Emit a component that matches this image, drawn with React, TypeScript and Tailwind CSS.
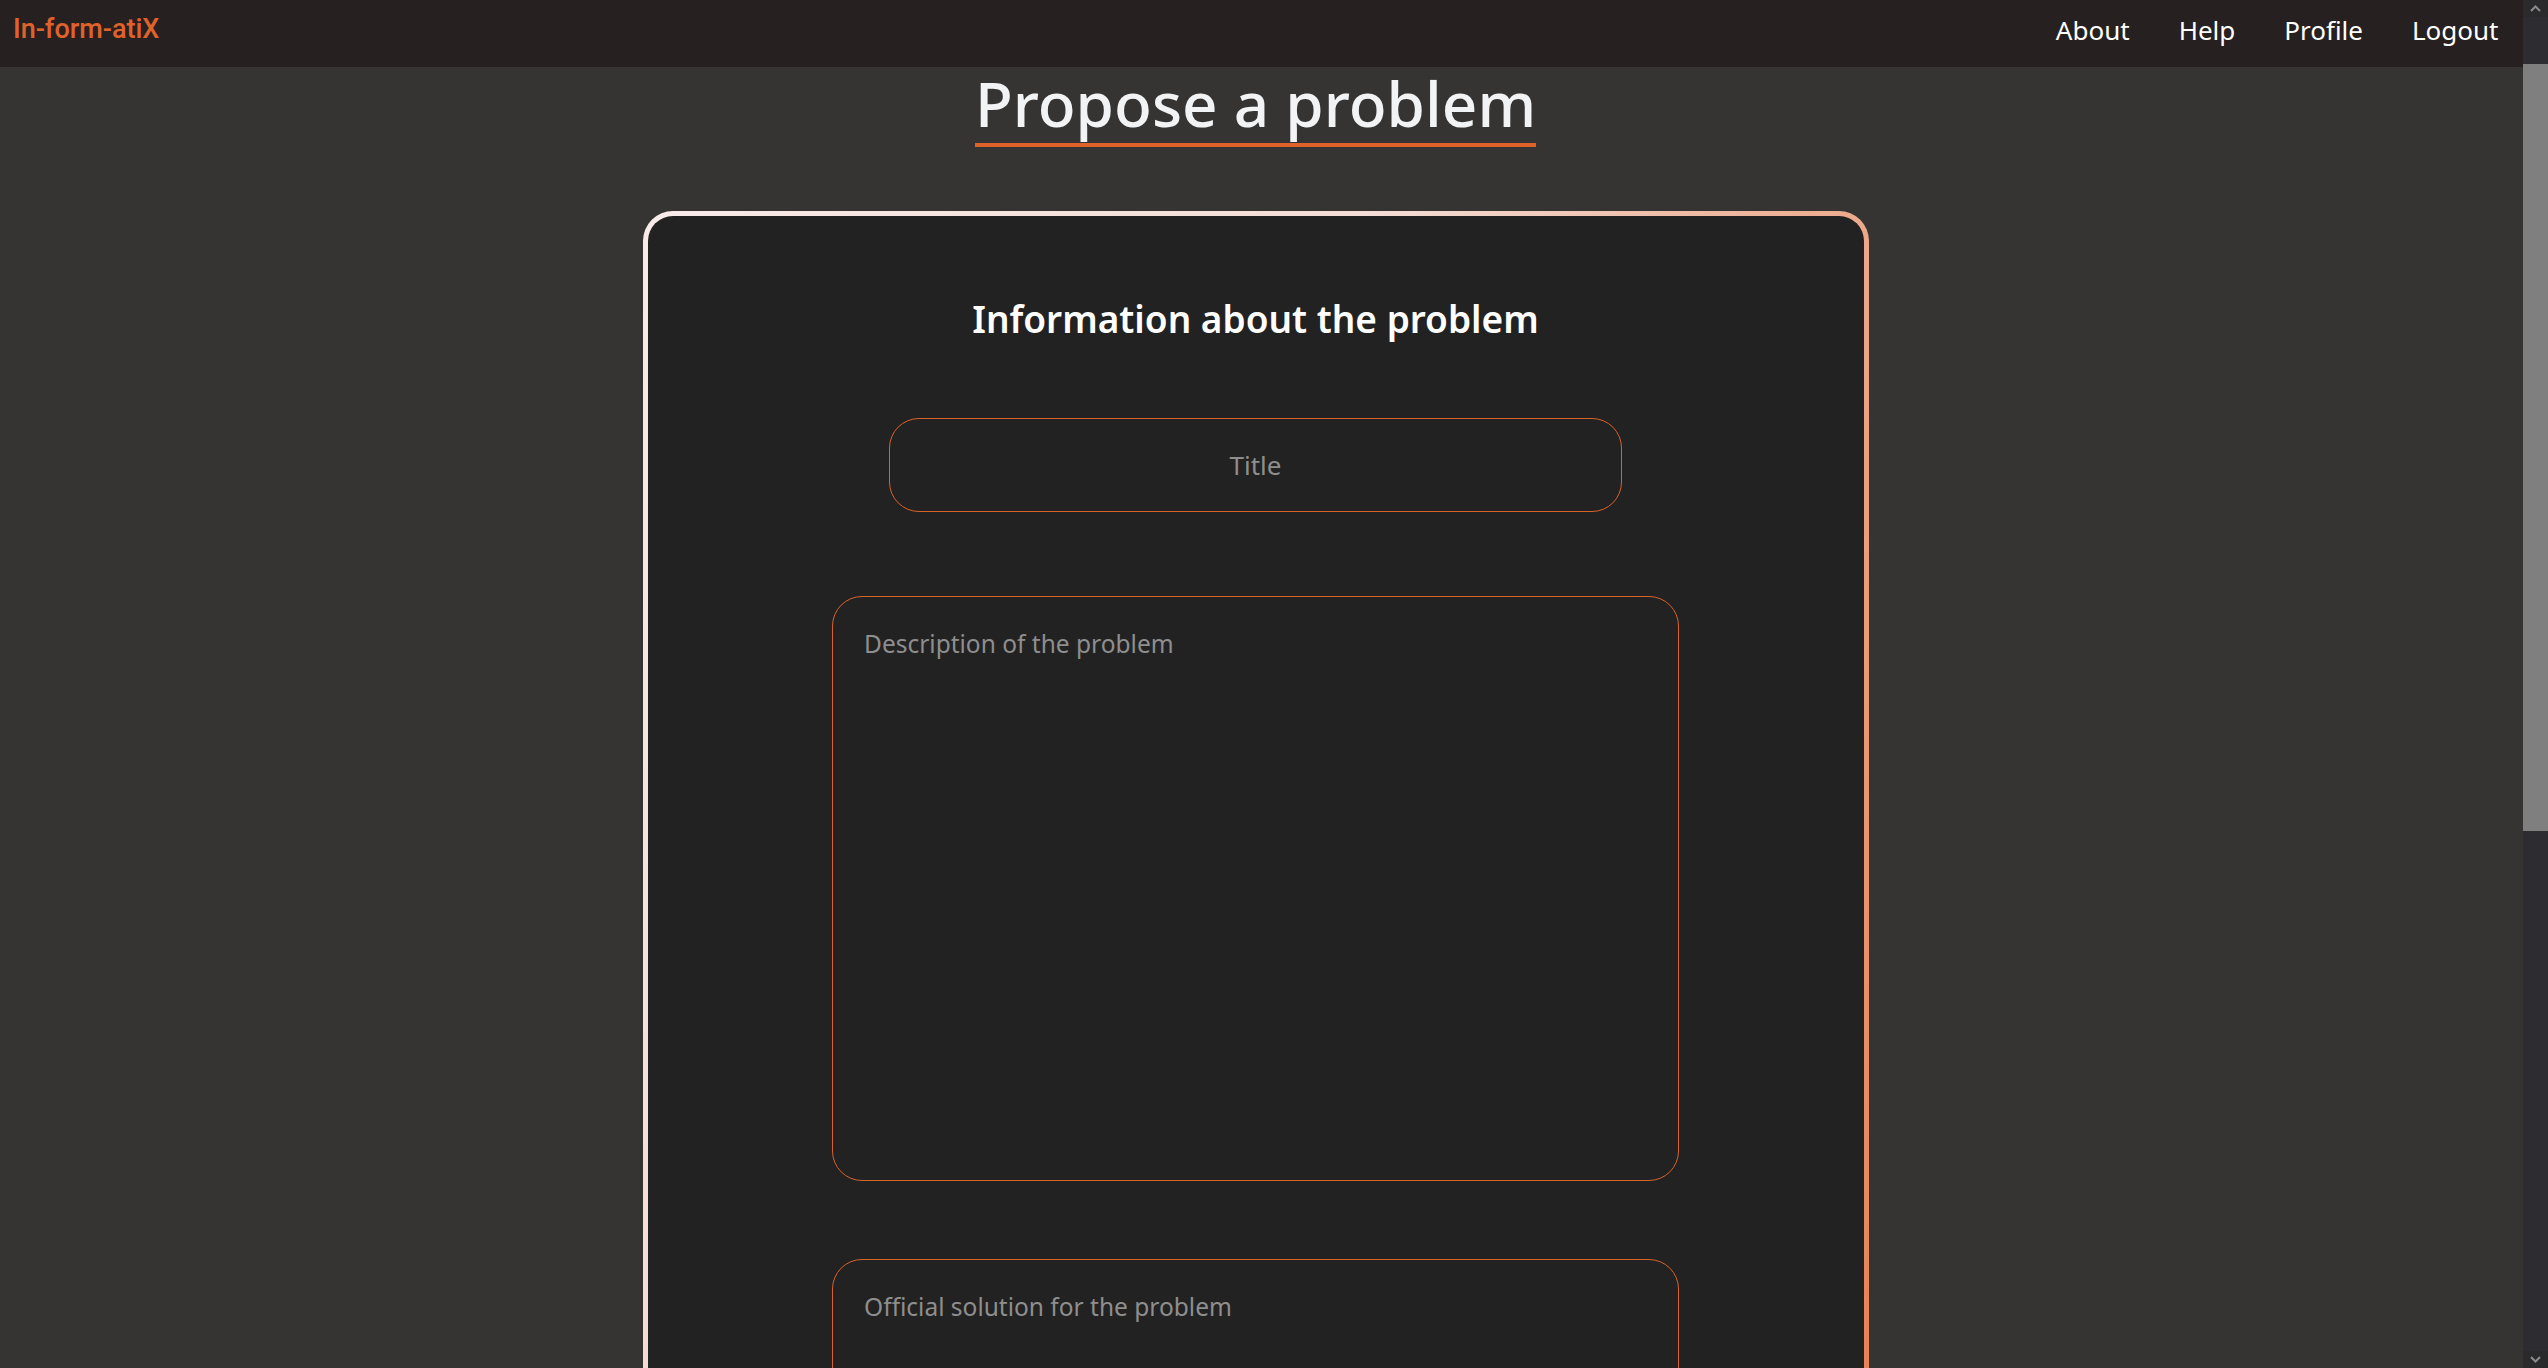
import { useState } from 'react';

const navLinks = ['About', 'Help', 'Profile', 'Logout'];

function Navbar() {
  return (
    <nav className="flex h-[67px] shrink-0 items-start justify-between bg-[#262020]">
      <a className="pl-[13px] pt-[13px] font-['Roboto',sans-serif] text-[27px] font-medium leading-[normal] text-[#e0622b]">
        In-form-atiX
      </a>
      <div className="flex">
        {navLinks.map((link) => (
          <a key={link} className="px-[24.5px] pt-[11.5px] text-[26px] leading-[normal] text-white">
            {link}
          </a>
        ))}
      </div>
    </nav>
  );
}

// window scrollbar as it shows in the screenshot (page scrolled a little)
function Scrollbar() {
  return (
    <div className="flex w-[25px] shrink-0 flex-col bg-[#2d2c30]">
      <div className="flex h-[17px] items-center justify-center bg-[#2a292c]">
        <svg width="11" height="7" viewBox="0 0 11 7" fill="none">
          <path d="M1 6l4.5-4.5L10 6" stroke="#8a8a8a" strokeWidth="2" />
        </svg>
      </div>
      <div className="h-[47px]" />
      <div className="h-[767px] bg-[#7f7f7f]" />
      <div className="flex-1" />
      <div className="flex h-[17px] items-center justify-center bg-[#2a292c]">
        <svg width="11" height="7" viewBox="0 0 11 7" fill="none">
          <path d="M1 1l4.5 4.5L10 1" stroke="#8a8a8a" strokeWidth="2" />
        </svg>
      </div>
    </div>
  );
}

function ProblemForm() {
  const [title, setTitle] = useState('');
  const [description, setDescription] = useState('');
  const [solution, setSolution] = useState('');

  const fieldClass =
    'rounded-[30px] border border-[#d9622b] bg-transparent leading-[normal] text-white outline-none placeholder:text-[#8e8e8e]';

  return (
    <div className="mt-[64px] w-[1226px] shrink-0 rounded-[30px] bg-[linear-gradient(to_bottom_right,#f8ebe9_0%,#f4ddd6_30%,#eca98b_50%,#e8875b_78%,#e26a35_100%)] p-[5px]">
      <form className="flex flex-col items-center rounded-[25px] bg-[#222222] pb-[80px] pt-[77px]">
        <h2 className="text-[37px] font-semibold leading-[normal] text-white">Information about the problem</h2>

        <input
          value={title}
          onChange={(e) => setTitle(e.target.value)}
          placeholder="Title"
          className={`mt-[74px] h-[94px] w-[733px] text-center text-[26px] ${fieldClass}`}
        />

        <textarea
          value={description}
          onChange={(e) => setDescription(e.target.value)}
          placeholder="Description of the problem"
          className={`mt-[84px] h-[585px] w-[847px] resize-none px-[31px] py-[30px] text-[24.5px] ${fieldClass}`}
        />

        <textarea
          value={solution}
          onChange={(e) => setSolution(e.target.value)}
          placeholder="Official solution for the problem"
          className={`mt-[78px] h-[585px] w-[847px] resize-none px-[31px] py-[30px] text-[24.5px] ${fieldClass}`}
        />

        <button
          type="submit"
          className="mt-[78px] h-[70px] rounded-[30px] bg-[#e0622b] px-[48px] text-[26px] font-semibold text-white"
        >
          Submit
        </button>
      </form>
    </div>
  );
}

export default function App() {
  return (
    <div className="flex h-screen w-full overflow-hidden bg-[#353432] font-['Noto_Sans',sans-serif]">
      <div className="flex min-w-0 flex-1 flex-col">
        <Navbar />
        <main className="flex flex-1 flex-col items-center overflow-hidden pr-[12px]">
          <h1 className="mt-[5px] inline-block shrink-0 border-b-4 border-[#e0622b] pb-[9px] text-[62px] font-medium leading-none text-[#f1f3f5]">
            Propose a problem
          </h1>
          <ProblemForm />
        </main>
      </div>
      <Scrollbar />
    </div>
  );
}
